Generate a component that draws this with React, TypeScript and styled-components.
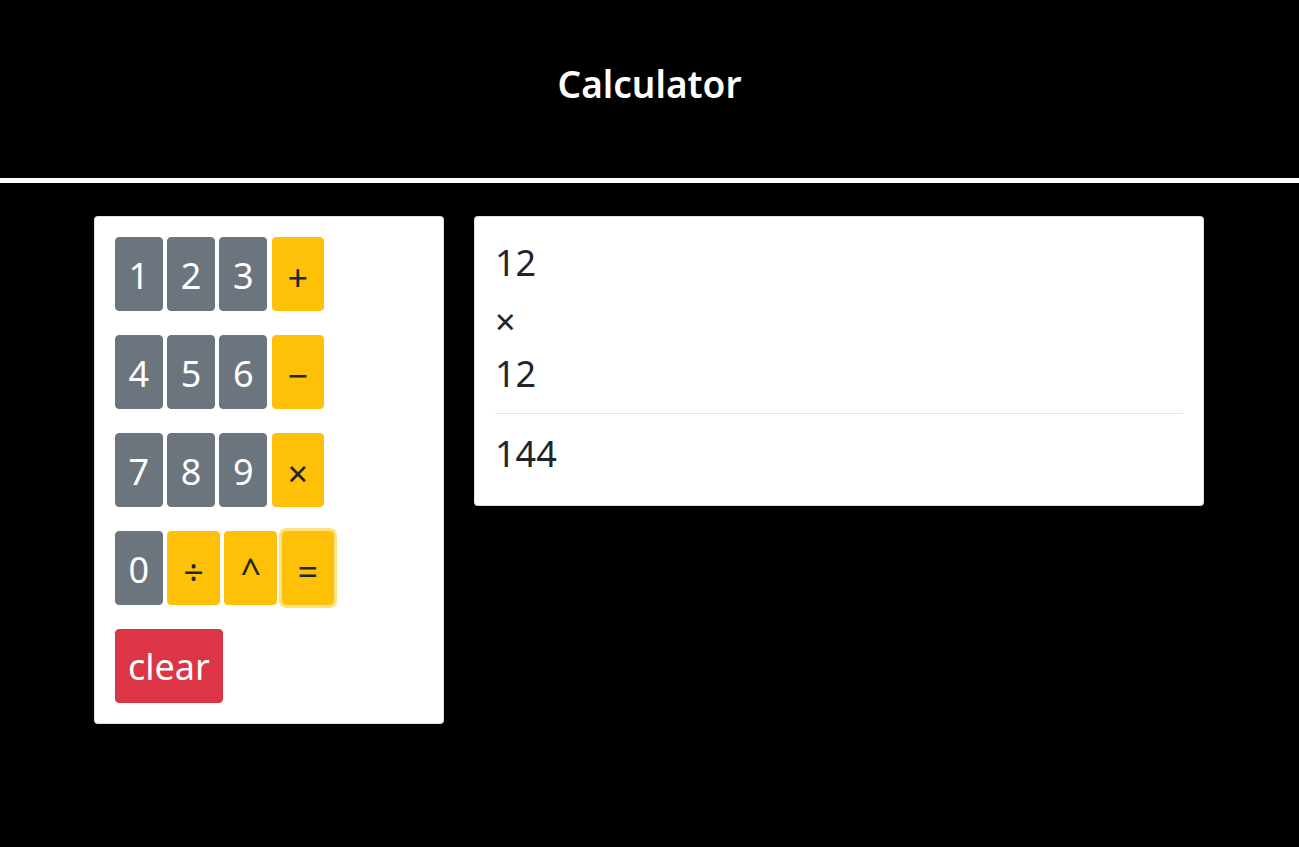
import React from "react";
import styled, { createGlobalStyle, css } from "styled-components";

const GlobalStyle = createGlobalStyle`
  html, body {
    margin: 0;
    padding: 0;
    background: #000;
    min-height: 100%;
  }
  body {
    font-family: "Noto Sans", "Open Sans", sans-serif;
    color: #212529;
  }
  * { box-sizing: border-box; }
`;

const Page = styled.div`
  min-height: 847px;
  background: #000;
`;

const Header = styled.header`
  height: 183px;
  padding-top: 62px;
  border-bottom: 5px solid #fff;
  text-align: center;
`;

const Title = styled.h1`
  margin: 0;
  font-size: 37px;
  font-weight: 600;
  line-height: 1.2;
  color: #fff;
`;

const Container = styled.main`
  max-width: 1141px;
  margin: 33px auto 0;
  padding: 0 15px;
  display: grid;
  grid-template-columns: 350px 730px;
  column-gap: 30px;
  align-items: start;
`;

const Card = styled.section`
  background: #fff;
  border: 1px solid rgba(0, 0, 0, 0.125);
  border-radius: 4px;
`;

const Keypad = styled(Card)`
  padding: 20px;
  display: flex;
  flex-direction: column;
  gap: 24.5px;
`;

const KeyRow = styled.div`
  display: flex;
  gap: 4.5px;
`;

type Variant = "number" | "operator" | "danger";

const variants = {
  number: css`
    background: #6c757d;
    border-color: #6c757d;
    color: #fff;
    width: 47.7px;
    padding-top: 4px;
  `,
  operator: css`
    background: #ffc107;
    border-color: #ffc107;
    color: #212529;
    width: 52.7px;
    padding-top: 9px;
  `,
  danger: css`
    background: #dc3545;
    border-color: #dc3545;
    color: #fff;
    padding: 3px 12px 0;
  `,
};

const Key = styled.button<{ $variant: Variant; $focused?: boolean }>`
  height: 73.5px;
  padding: 0;
  border: 1px solid transparent;
  border-radius: 4px;
  font-family: "Noto Sans", "Open Sans", sans-serif;
  font-size: 36px;
  font-weight: 400;
  line-height: 1;
  display: flex;
  align-items: center;
  justify-content: center;
  cursor: pointer;
  ${(p) => variants[p.$variant]}
  ${(p) =>
    p.$focused &&
    css`
      box-shadow: 0 0 0 3px rgba(255, 193, 7, 0.5);
    `}
`;

const Display = styled(Card)`
  padding: 17.5px 20px 23.5px;
`;

const Line = styled.div<{ $operator?: boolean }>`
  height: 55.5px;
  font-size: 36px;
  line-height: 55.5px;
  color: #212529;
  padding-top: ${(p) => (p.$operator ? "4px" : "0")};
`;

const Divider = styled.hr`
  margin: 12px 0;
  border: 0;
  border-top: 1px solid rgba(0, 0, 0, 0.1);
`;

type KeyDef = { label: string; variant: Variant; focused?: boolean };

const rows: KeyDef[][] = [
  [
    { label: "1", variant: "number" },
    { label: "2", variant: "number" },
    { label: "3", variant: "number" },
    { label: "+", variant: "operator" },
  ],
  [
    { label: "4", variant: "number" },
    { label: "5", variant: "number" },
    { label: "6", variant: "number" },
    { label: "−", variant: "operator" },
  ],
  [
    { label: "7", variant: "number" },
    { label: "8", variant: "number" },
    { label: "9", variant: "number" },
    { label: "×", variant: "operator" },
  ],
  [
    { label: "0", variant: "number" },
    { label: "÷", variant: "operator" },
    { label: "^", variant: "operator" },
    { label: "=", variant: "operator", focused: true },
  ],
  [{ label: "clear", variant: "danger" }],
];

export default function App() {
  return (
    <Page>
      <GlobalStyle />
      <Header>
        <Title>Calculator</Title>
      </Header>
      <Container>
        <Keypad>
          {rows.map((row, i) => (
            <KeyRow key={i}>
              {row.map((k) => (
                <Key key={k.label} $variant={k.variant} $focused={k.focused}>
                  {k.label}
                </Key>
              ))}
            </KeyRow>
          ))}
        </Keypad>
        <Display>
          <Line>12</Line>
          <Line $operator>×</Line>
          <Line>12</Line>
          <Divider />
          <Line>144</Line>
        </Display>
      </Container>
    </Page>
  );
}
